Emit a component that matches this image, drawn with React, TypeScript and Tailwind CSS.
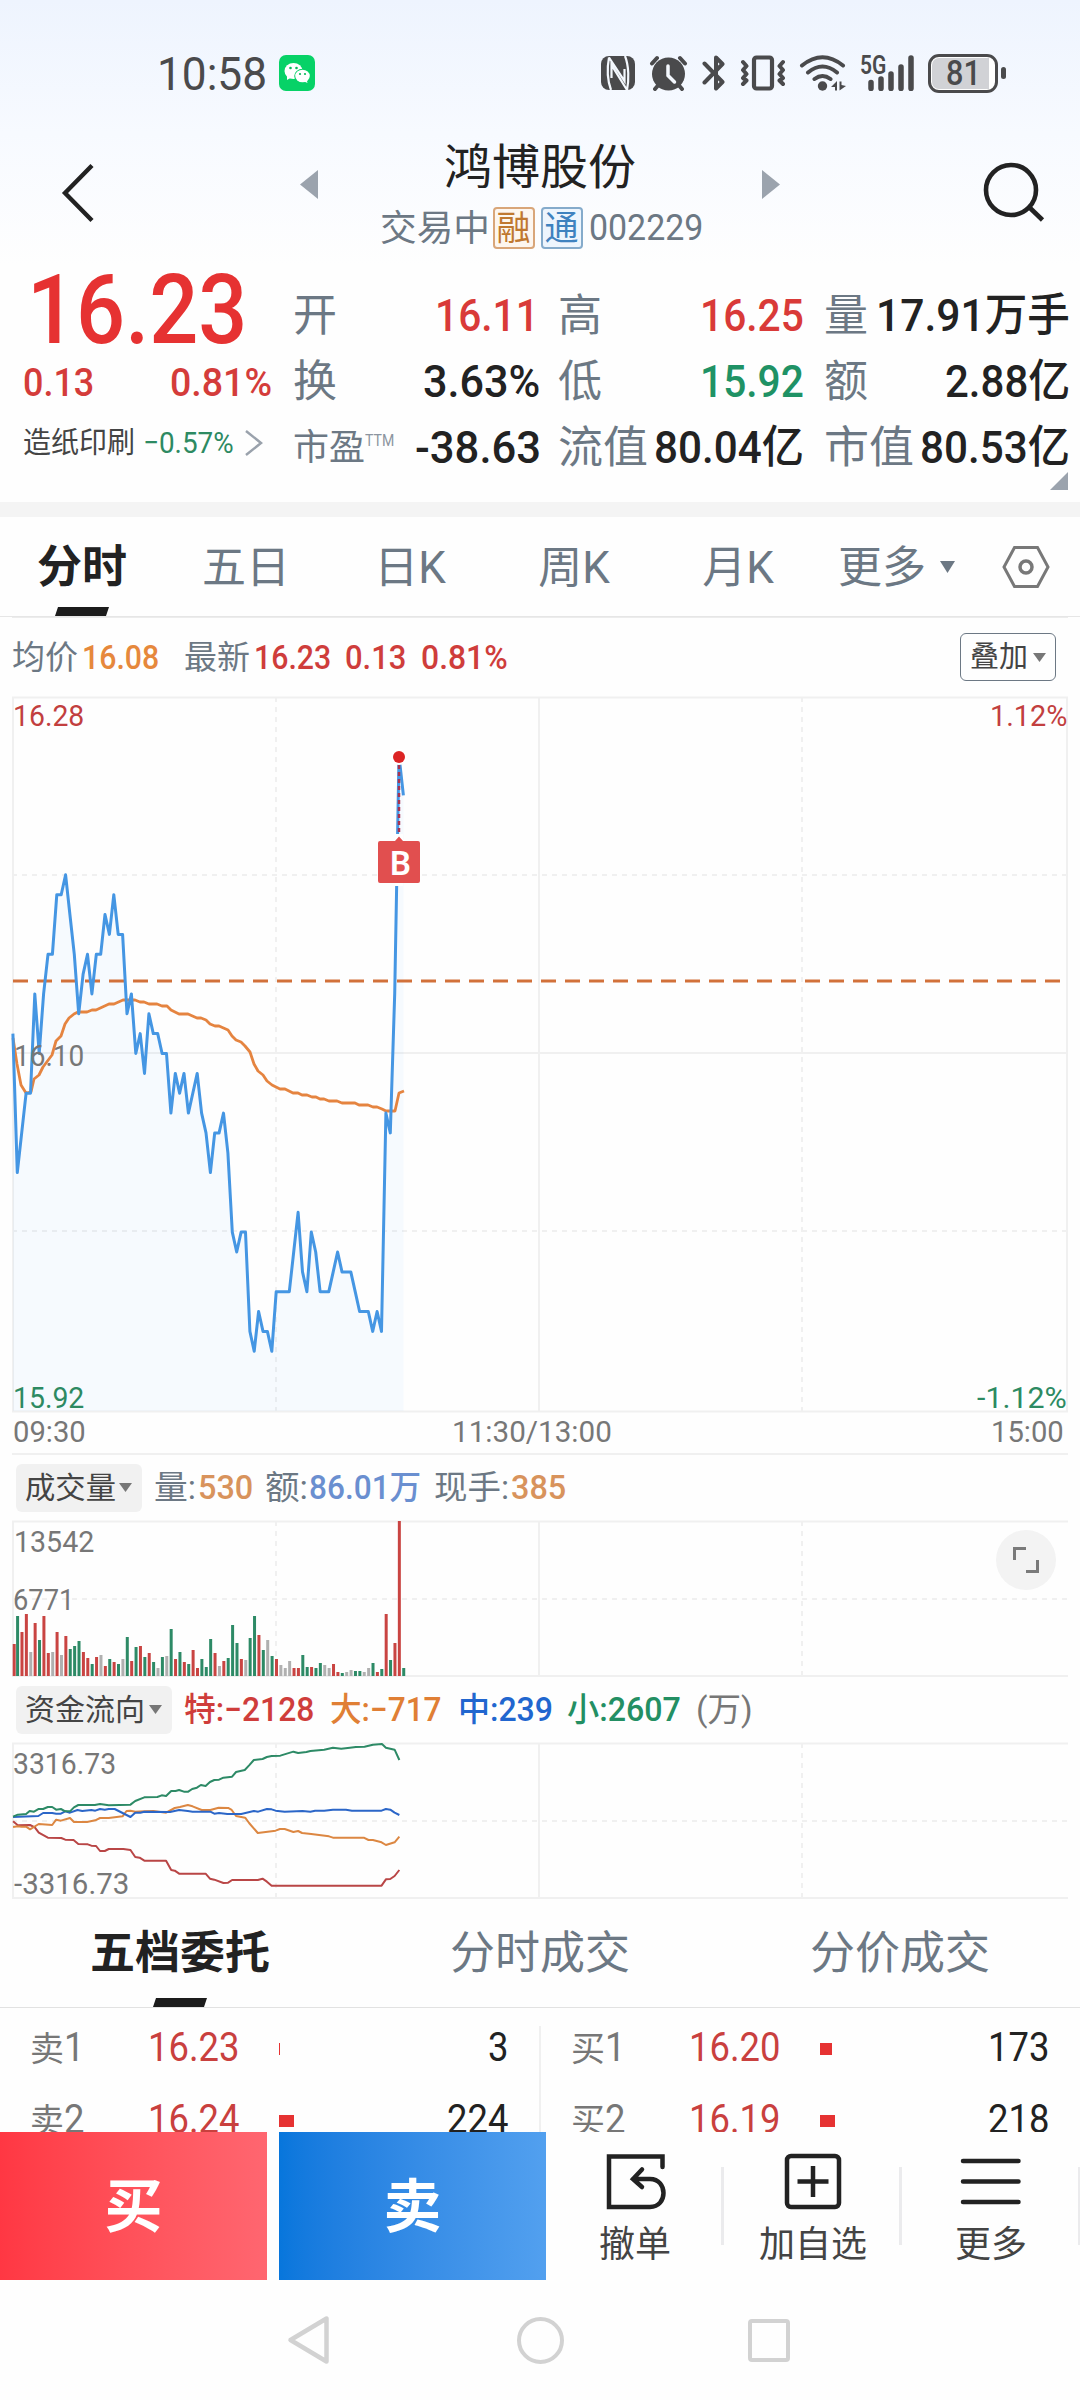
import React, { useLayoutEffect, useRef, useState } from "react";

/** Text squeezed or stretched horizontally so that it fills the width of its box. */
function Fit({ className = "", children }: { className?: string; children: React.ReactNode }) {
  const box = useRef<HTMLSpanElement>(null);
  const inner = useRef<HTMLSpanElement>(null);
  const [scale, setScale] = useState(1);
  useLayoutEffect(() => {
    if (box.current && inner.current) {
      setScale(box.current.clientWidth / inner.current.offsetWidth);
    }
  }, []);
  return (
    <span ref={box} className={"block shrink-0 whitespace-nowrap leading-none " + className}>
      <span ref={inner} className="inline-block origin-left whitespace-nowrap" style={{ transform: `scaleX(${scale})` }}>
        {children}
      </span>
    </span>
  );
}

const Caret = ({ className }: { className: string }) => (
  <svg viewBox="0 0 14 10" preserveAspectRatio="none" className={"shrink-0 " + className}>
    <path d="M0 0H14L7 10Z" fill="currentColor" />
  </svg>
);

function StatusBar() {
  return (
    <div className="flex h-[146px] items-center pl-[157px] text-[#4a4a4c]">
      <Fit className="w-[110px] text-[47px]">10:58</Fit>
      <svg viewBox="0 0 36 36" className="ml-3 h-9 w-9 shrink-0">
        <rect width="36" height="36" rx="7" fill="#07d267" />
        <ellipse cx="14.5" cy="16" rx="9" ry="8" fill="#fff" />
        <path d="M8 21l0 4 5-3z" fill="#fff" />
        <ellipse cx="23.5" cy="21" rx="8.3" ry="7.2" fill="#07d267" />
        <ellipse cx="23.5" cy="21" rx="7.3" ry="6.3" fill="#fff" />
        <path d="M24 26l4.500 2-1-4z" fill="#fff" />
        <g fill="#07b95a">
          <circle cx="11.500" cy="13" r="1.300" />
          <circle cx="17.500" cy="13" r="1.300" />
          <circle cx="21" cy="19" r="1.100" />
          <circle cx="26" cy="19" r="1.100" />
        </g>
      </svg>
      <svg viewBox="601 55 34 36" className="ml-[286px] h-9 w-[34px] shrink-0">
        <rect x="601" y="56" width="34" height="34" rx="8" fill="currentColor" />
        <path d="M609 57.500C607 68 607 79 611 90M609 57.500L624.500 81V69M627 90L611.500 65V78M625 56C629 66 629 80 627 90" fill="none" stroke="#f4f8fe" strokeWidth="2.200" />
      </svg>
      <svg viewBox="649 55 40 36" className="ml-[14px] h-9 w-10 shrink-0" fill="none" stroke="currentColor" strokeLinecap="round">
        <circle cx="668.500" cy="74" r="16.500" fill="currentColor" stroke="none" />
        <path d="M652 63.500L657 58M685 63.500L680 58M655 89L658 85.500M682 89L679 85.500" strokeWidth="4" />
        <path d="M668 66V75.500L674.500 82" stroke="#f4f8fe" strokeWidth="3.500" />
      </svg>
      <svg viewBox="702 55 24 36" className="ml-[13px] h-9 w-6 shrink-0" fill="none" stroke="currentColor" strokeWidth="4" strokeLinecap="round" strokeLinejoin="round">
        <path d="M704.500 63.500L722.500 82L716 88.500V57.500L722.500 64L704.500 82.500" />
      </svg>
      <svg viewBox="740 55 46 36" className="ml-[14px] h-9 w-[46px] shrink-0" fill="none" stroke="currentColor" strokeLinecap="round" strokeLinejoin="round">
        <rect x="754" y="57.500" width="18" height="31" rx="2.500" strokeWidth="4.200" />
        <path d="M743 62L746.500 66L743 70L746.500 74L743 78L746.500 80.500L743 84M783 62L779.500 66L783 70L779.500 74L783 78L779.500 80.500L783 84" strokeWidth="4" />
      </svg>
      <svg viewBox="798 55 50 36" className="ml-3 h-9 w-[50px] shrink-0" fill="none" stroke="currentColor" strokeLinecap="round">
        <path d="M802 65.500Q822.500 49 843 65.500M808 72.500Q822.500 60.500 837 72.500M814.500 79Q822.500 73 830.500 79" strokeWidth="4" />
        <circle cx="822.500" cy="86" r="4.700" fill="currentColor" stroke="none" />
        <path d="M831 87L837 81V90.500H835V87ZM846 86L839.500 90.500V81.500H841.500V85Z" fill="currentColor" stroke="none" />
      </svg>
      <div className="relative ml-3 h-9 w-[54px] shrink-0">
        <svg viewBox="860 55 54 36" className="h-9 w-[54px]" stroke="currentColor" strokeWidth="5.500" strokeLinecap="round">
          <path d="M871 82.500V88.500M881 79V88.500M891 74V88.500M901 67V88.500M911 58V88.500" />
        </svg>
        <Fit className="absolute left-0 -top-0.5 w-[26px] text-[25px] font-semibold">5G</Fit>
      </div>
      <div className="relative ml-[14px] flex h-[39px] w-[70px] shrink-0 items-center justify-center rounded-[11px] border-[3px] border-[#4a4a4c] bg-white">
        <div className="absolute bottom-px left-px top-px w-[57px] rounded-l-[7px] bg-[#d1d2d6]" />
        <Fit className="relative w-[35px] text-[35px] font-medium">81</Fit>
      </div>
      <div className="ml-[3px] h-3 w-[5px] rounded-sm bg-[#4a4a4c]" />
    </div>
  );
}

function Header() {
  return (
    <div className="flex h-[119px] items-start text-[#222]">
      <svg viewBox="60 160 36 66" className="ml-[60px] mt-[14px] h-[66px] w-9 shrink-0">
        <path d="M92 165.500L65 193L92 220.500" fill="none" stroke="currentColor" strokeWidth="4.400" />
      </svg>
      <svg viewBox="0 0 18 29" className="ml-[204px] mt-6 h-[29px] w-[18px] shrink-0">
        <path d="M18 0V29L0 14.500Z" fill="#9ba3ad" />
      </svg>
      <div className="flex w-[444px] shrink-0 flex-col items-center">
        <div className="-mt-[5px] flex h-[54px] items-center text-[48px] leading-none">鸿博股份</div>
        <div className="mt-[12px] flex h-[42px] items-center pl-[2px] text-[#6c7884]">
          <Fit className="mt-0.5 w-[110px] text-[36px]">交易中</Fit>
          <div className="ml-[3px] flex h-[42px] w-[42px] items-center justify-center rounded border-2 border-[#d9a679] bg-[#fdf6ef] text-[34px] leading-none text-[#c07830]">融</div>
          <div className="ml-1.5 flex h-[42px] w-[42px] items-center justify-center rounded border-2 border-[#85abcb] bg-[#edf5fd] text-[34px] leading-none text-[#3f82bf]">通</div>
          <Fit className="ml-1.5 w-[114px] text-[36px]">002229</Fit>
        </div>
      </div>
      <svg viewBox="0 0 18 29" className="mt-6 h-[29px] w-[18px] shrink-0">
        <path d="M0 0V29L18 14.500Z" fill="#9ba3ad" />
      </svg>
      <svg viewBox="980 160 68 66" className="ml-[200px] mt-[14px] h-[66px] w-[68px] shrink-0" fill="none" stroke="currentColor" strokeWidth="4.600">
        <circle cx="1011" cy="190" r="25" />
        <path d="M1029 207L1042.500 220" />
      </svg>
    </div>
  );
}

const lab = "-ml-[2px] pt-[4px] text-[44px] text-[#6c7884]";
const val = "pt-[2px] text-[45px] font-medium";

function Quote() {
  return (
    <div className="relative flex h-[237px] shrink-0 text-[#222]">
      <div className="flex w-[295px] shrink-0 flex-col pl-[23px]">
        <Fit className="mt-[-3px] h-[94px] w-[220px] pl-[4px] text-[97px] font-medium text-[#e63232]">16.23</Fit>
        <div className="mt-0.5 flex h-[50px] items-center text-[#d43c3a]">
          <Fit className="w-[71px] text-[39px] font-medium">0.13</Fit>
          <Fit className="ml-[76px] w-[102px] text-[39px] font-medium">0.81%</Fit>
        </div>
        <div className="mt-[15px] flex h-10 items-center">
          <Fit className="w-[112px] text-[29px] text-[#444]">造纸印刷</Fit>
          <Fit className="ml-[8px] w-[91px] text-[30px] text-[#2d8a62]">−0.57%</Fit>
          <svg viewBox="0 0 18 28" className="ml-[11px] h-7 w-[18px]">
            <path d="M1 2L16 14L1 26" fill="none" stroke="#9aa2ac" strokeWidth="2.500" />
          </svg>
        </div>
      </div>
      <div className="mt-4 grid h-[198px] grid-cols-[246px_19px_244px_22px_244px] grid-rows-3">
        <div className="flex items-center justify-between">
          <Fit className={"w-[44px] " + lab}>开</Fit>
          <Fit className={"mr-[2px] w-[104px] text-[#d93a38] " + val}>16.11</Fit>
        </div>
        <div />
        <div className="flex items-center justify-between">
          <Fit className={"w-[44px] " + lab}>高</Fit>
          <Fit className={"w-[104px] text-[#d93a38] " + val}>16.25</Fit>
        </div>
        <div />
        <div className="flex items-center justify-between">
          <Fit className={"w-[44px] " + lab}>量</Fit>
          <Fit className={"w-[194px] " + val}>17.91万手</Fit>
        </div>

        <div className="flex items-center justify-between">
          <Fit className={"w-[44px] " + lab}>换</Fit>
          <Fit className={"mr-px w-[117px] " + val}>3.63%</Fit>
        </div>
        <div />
        <div className="flex items-center justify-between">
          <Fit className={"w-[44px] " + lab}>低</Fit>
          <Fit className={"w-[104px] text-[#1f9265] " + val}>15.92</Fit>
        </div>
        <div />
        <div className="flex items-center justify-between">
          <Fit className={"w-[44px] " + lab}>额</Fit>
          <Fit className={"w-[125px] " + val}>2.88亿</Fit>
        </div>

        <div className="flex items-center">
          <Fit className="-ml-[2px] w-[72px] pt-[3px] text-[36px] text-[#6c7884]">市盈</Fit>
          <Fit className="-mt-[11px] w-[29px] text-[17px] text-[#8c95a0]">TTM</Fit>
          <Fit className={"ml-auto w-[126px] " + val}>-38.63</Fit>
        </div>
        <div />
        <div className="flex items-center justify-between">
          <Fit className={"w-[90px] " + lab}>流值</Fit>
          <Fit className={"w-[150px] " + val}>80.04亿</Fit>
        </div>
        <div />
        <div className="flex items-center justify-between">
          <Fit className={"w-[90px] " + lab}>市值</Fit>
          <Fit className={"w-[150px] " + val}>80.53亿</Fit>
        </div>
      </div>
      <svg viewBox="0 0 18 18" className="absolute bottom-3 right-3 h-[18px] w-[18px]">
        <path d="M18 0V18H0Z" fill="#9ba3ad" />
      </svg>
    </div>
  );
}

const Underline = () => (
  <svg viewBox="0 0 54 9" className="absolute bottom-0 left-1/2 h-[9px] w-[54px] -translate-x-1/2">
    <path d="M3 0H54L51 9H0Z" fill="#1c1c1c" />
  </svg>
);

function PeriodTabs() {
  return (
    <div className="flex h-[100px] shrink-0 items-center border-b border-[#e6e6e6] text-[44px] leading-none text-[#6c7884]">
      <div className="relative flex h-full w-[164px] items-center justify-center pt-[2px] text-[45px] font-bold text-[#222]">
        分时
        <Underline />
      </div>
      {["五日", "日K", "周K", "月K"].map((t) => (
        <div key={t} className="flex w-[164px] items-center justify-center pt-[2px]">
          {t}
        </div>
      ))}
      <div className="ml-[18px] pt-[2px]">更多</div>
      <Caret className="ml-[14px] h-3 w-[15px]" />
      <svg viewBox="1000 545 52 46" className="ml-[45px] h-[46px] w-[52px]" fill="none" stroke="#787878" strokeWidth="3">
        <path d="M1014.500 548.500H1037.500L1048 568L1037.500 587.500H1014.500L1004 568Z" />
        <circle cx="1026" cy="568" r="6" strokeWidth="3.500" />
      </svg>
    </div>
  );
}

function LegendRow() {
  return (
    <div className="mx-3 flex h-[79px] shrink-0 items-center border-t border-[#ececec] text-[33px] text-[#6c7884]">
      <Fit className="w-[66px]">均价</Fit>
      <Fit className="ml-[4px] w-[77px] font-medium text-[#e6883c]">16.08</Fit>
      <Fit className="ml-[25px] w-[66px]">最新</Fit>
      <Fit className="ml-[4px] w-[77px] font-medium text-[#cf3d3b]">16.23</Fit>
      <Fit className="ml-[14px] w-[61px] font-medium text-[#cf3d3b]">0.13</Fit>
      <Fit className="ml-[15px] w-[87px] font-medium text-[#cf3d3b]">0.81%</Fit>
      <div className="ml-auto mr-3 flex h-12 w-24 items-center justify-center rounded-md border border-[#6c7884] text-[#444]">
        <Fit className="w-[58px] pt-px text-[29px]">叠加</Fit>
        <Caret className="ml-[5px] h-[9px] w-[13px] text-[#777]" />
      </div>
    </div>
  );
}

const MINUTE = 4.388;
const minuteX = (i: number) => 12.9 + i * MINUTE;

/* Price of each minute, in cents relative to 16.10 */
const prices = [
  1, -6, -4, -2, -2, 3, 0, 3, 5, 5, 8, 8, 9, 7, 5, 2, 4, 5, 3, 5, 5, 7, 6, 8, 6, 6, 2, 3, 0, 1, -1, 2, 1, 1, 0, 0, -3,
  -1, -2, -1, -3, -2, -1, -3, -4, -6, -4, -4, -3, -5, -9, -10, -9, -9, -14, -15, -13, -14, -14, -15, -12, -12, -12,
  -12, -10, -8, -11, -12, -9, -10, -12, -12, -12, -11, -10, -11, -11, -11, -12, -13, -13, -13, -14, -13, -14, -3, -4,
  3, 15, 13,
];
const priceY = (c: number) => 357.5 - c * 19.85;
const priceLine = prices.map((c, i) => `${minuteX(i).toFixed(1)},${priceY(c).toFixed(1)}`).join(" ");

const averageLine =
  "13,342 17,368 21,389 26,397 31,396 34,383 39,379 43,371 52,359 56,345 61,340 65,328 69,322 74,318 78,316 87,316 92,314 96,314 109,308 114,308 123,304 135,304 140,306 144,306 149,308 157,308 162,310 167,310 171,314 179,318 188,318 197,322 201,322 206,324 210,328 215,330 219,330 228,334 232,340 236,344 241,346 245,350 250,356 254,368 258,375 263,379 267,385 272,389 280,393 285,393 293,397 298,397 302,399 307,399 312,401 316,401 320,403 324,403 329,405 337,405 342,407 355,407 359,409 368,409 373,411 377,411 382,413 386,415 395,415 399,397 404,395";

const axisText = "absolute text-[30px]";

function PriceChart() {
  return (
    <div className="relative h-[717px] shrink-0">
      <svg viewBox="0 0 1080 717" className="h-[717px] w-[1080px]" fill="none">
        <g stroke="#f0f0f0" strokeWidth="2">
          <path d="M12 1.500H1068M12 357H1068M12 715.500H1068M13 1V716M539 1V716M1067 1V716" />
          <path d="M12 179H1068M12 535H1068M276 1V716M802 1V716" strokeDasharray="5 5" />
        </g>
        <polygon points={`13,715 ${priceLine} 403.500,715`} fill="#3f96f5" fillOpacity="0.04" />
        <path d="M13 285H1062" stroke="#d2713a" strokeWidth="3" strokeDasharray="15 9" />
        <polyline points={averageLine} stroke="#e58440" strokeWidth="2.800" strokeLinejoin="round" />
        <polyline points={priceLine} stroke="#4596e3" strokeWidth="3" strokeLinejoin="round" />
        <circle cx="399" cy="61" r="8" fill="#fff" />
        <path d="M399 69V137" stroke="#a83250" strokeWidth="2.500" strokeDasharray="4 3" />
        <circle cx="399" cy="61" r="6" fill="#dc2424" />
        <path d="M395 187h8v3h-8zM395 138h8v6h-8z" fill="#fff" />
        <path d="M380 145H395L399 140.500L403 145H418Q420 145 420 147V185Q420 187 418 187H380Q378 187 378 185V147Q378 145 380 145Z" fill="#e14f4f" />
      </svg>
      <Fit className="absolute left-[390px] top-[151px] w-[21px] text-[33px] font-semibold text-white">B</Fit>
      <Fit className={axisText + " left-[13px] top-[5px] w-[71px] text-[#c23f3f]"}>16.28</Fit>
      <Fit className={axisText + " left-[14px] top-[345px] w-[70px] text-[#777]"}>16.10</Fit>
      <Fit className={axisText + " left-[13px] top-[687px] w-[71px] text-[#2d8a62]"}>15.92</Fit>
      <Fit className={axisText + " left-[990px] top-[5px] w-[77px] text-[#c23f3f]"}>1.12%</Fit>
      <Fit className={axisText + " left-[977px] top-[687px] w-[90px] text-[#2d8a62]"}>-1.12%</Fit>
    </div>
  );
}

function TimeAxis() {
  return (
    <div className="mx-3 flex h-[42px] shrink-0 items-center border-b-2 border-[#f0f0f0] pb-0.5 text-[30px] text-[#777]">
      <Fit className="ml-px w-[73px]">09:30</Fit>
      <Fit className="ml-[366px] w-[160px]">11:30/13:00</Fit>
      <Fit className="ml-auto mr-[4px] w-[73px]">15:00</Fit>
    </div>
  );
}

const pill = "ml-4 flex h-12 shrink-0 items-center rounded-md bg-[#f1f1f1] pl-[9px] text-[30px] text-[#444]";

function VolumeRow() {
  return (
    <div className="flex h-[65px] shrink-0 items-center text-[33px] text-[#6c7884]">
      <div className={pill + " w-[126px]"}>
        <Fit className="w-[91px]">成交量</Fit>
        <Caret className="ml-[3px] h-[9px] w-[13px] text-[#777]" />
      </div>
      <Fit className="ml-[12px] w-[42px]">量:</Fit>
      <Fit className="ml-[2px] w-[55px] font-medium text-[#d8935c]">530</Fit>
      <Fit className="ml-[12px] w-[43px]">额:</Fit>
      <Fit className="ml-[1px] w-[112px] font-medium text-[#6a8fd0]">86.01万</Fit>
      <Fit className="ml-[13px] w-[75px]">现手:</Fit>
      <Fit className="ml-[2px] w-[55px] font-medium text-[#d8935c]">385</Fit>
    </div>
  );
}

/* Bar height of each minute; r = up, g = down, n = unchanged */
const volumes =
  "r32 g60 r44 r62 n24 r53 g36 r60 r23 n24 r44 n21 r40 g27 g30 g35 r24 r18 g12 r19 n21 r10 g17 r14 g12 n17 g39 r15 g29 r30 g19 r23 g14 n8 g19 n20 g47 r17 g24 r14 g12 r26 r8 g17 g9 g37 r23 n10 r15 g18 g51 g33 r17 n16 g38 g60 r41 g26 n36 g20 r17 n11 n8 n15 r8 r8 g21 g9 r9 g8 g13 n11 n8 r12 r4 g3 n4 n6 g5 g5 n4 n8 g13 r4 g7 r62 g16 r33 r155 g8"
    .split(" ")
    .map((v) => ({ kind: v[0], height: Number(v.slice(1)) }));
const barColors: Record<string, string> = { r: "#c94442", g: "#2d8a66", n: "#b0b0b0" };

const SubGrid = () => (
  <g stroke="#f0f0f0" strokeWidth="2">
    <path d="M12 1.500H1068M12 156H1068M13 1V156M539 1V156" />
    <path d="M12 79H1068M276 1V156M802 1V156" strokeDasharray="5 5" />
  </g>
);

function VolumeChart() {
  return (
    <div className="relative h-[157px] shrink-0">
      <svg viewBox="0 0 1080 157" className="h-[157px] w-[1080px]" fill="none">
        <SubGrid />
        {volumes.map((v, i) => (
          <rect key={i} x={minuteX(i) - 0.2 - (i === 0 ? 0 : 1)} y={156 - v.height} width={3} height={v.height} fill={barColors[v.kind]} />
        ))}
      </svg>
      <Fit className={axisText + " left-[14px] top-[7px] w-[80px] text-[#777]"}>13542</Fit>
      <Fit className={axisText + " left-[13px] top-[65px] w-[61px] text-[#777]"}>6771</Fit>
      <div className="absolute right-6 top-[10px] flex h-[60px] w-[60px] items-center justify-center rounded-full bg-[#f3f3f3]">
        <svg viewBox="0 0 28 28" className="h-7 w-7" fill="none" stroke="#7a7a7a" strokeWidth="3">
          <path d="M2.500 14V2.500H14M25.500 14V25.500H14" />
        </svg>
      </div>
    </div>
  );
}

function FlowRow() {
  return (
    <div className="flex h-[65px] shrink-0 items-center text-[33px] font-medium">
      <div className={pill + " w-[156px] font-normal"}>
        <Fit className="w-[120px]">资金流向</Fit>
        <Caret className="ml-[4px] h-[9px] w-[13px] text-[#777]" />
      </div>
      <Fit className="ml-[12px] w-[130px] text-[#cf3d3b]">特:−2128</Fit>
      <Fit className="ml-[16px] w-[112px] text-[#e07f35]">大:−717</Fit>
      <Fit className="ml-[16px] w-[95px] text-[#2166cf]">中:239</Fit>
      <Fit className="ml-[14px] w-[114px] text-[#238f63]">小:2607</Fit>
      <Fit className="ml-[15px] w-[57px] font-normal text-[#777]">(万)</Fit>
    </div>
  );
}

const flows = [
  {
    color: "#b94646",
    points:
      "33,1144 45,1156 76,1155 88,1162 98,1178 121,1193 155,1194 165,1199 186,1200 198,1212 222,1213 231,1217 243,1218 253,1233 265,1233 275,1227 312,1227 330,1230 342,1251 353,1253 365,1262 420,1262 433,1290 442,1292 453,1301 520,1301 531,1316 542,1319 565,1329 577,1328 587,1320 652,1320 664,1316 675,1325 687,1337 965,1337 976,1318 987,1317 998,1308 1010,1290",
  },
  {
    color: "#dc8742",
    points:
      "33,1161 45,1159 54,1160 66,1160 76,1168 98,1152 132,1155 142,1139 154,1142 177,1134 187,1146 220,1146 241,1141 253,1134 275,1134 310,1129 320,1113 330,1112 342,1115 365,1114 388,1113 420,1118 442,1104 455,1101 475,1095 487,1099 510,1110 532,1110 553,1103 577,1104 586,1110 597,1128 620,1133 630,1149 652,1179 697,1172 708,1167 720,1167 742,1176 754,1173 764,1179 787,1182 832,1189 842,1193 920,1193 932,1200 943,1200 965,1207 976,1215 998,1207 1010,1190",
  },
  {
    color: "#2b66c8",
    points:
      "33,1131 97,1128 109,1119 132,1119 142,1121 154,1121 165,1114 177,1118 196,1110 208,1113 231,1110 241,1112 253,1107 265,1109 275,1107 290,1107 330,1131 342,1118 355,1118 365,1115 430,1116 453,1110 475,1113 487,1115 532,1115 542,1121 554,1119 575,1122 610,1122 642,1113 653,1115 675,1107 687,1108 697,1112 720,1115 765,1113 785,1115 797,1112 820,1112 842,1109 875,1109 890,1112 965,1112 976,1107 987,1109 998,1118 1010,1125",
  },
  {
    color: "#2d8a66",
    points:
      "33,1130 45,1124 66,1122 75,1113 86,1115 98,1107 109,1107 121,1101 132,1101 142,1109 154,1107 165,1114 177,1114 187,1102 198,1095 240,1095 253,1092 275,1096 330,1094 342,1083 365,1072 398,1071 409,1066 420,1068 433,1053 444,1053 453,1050 465,1055 476,1055 486,1047 498,1043 508,1035 520,1038 531,1026 542,1020 554,1019 565,1013 587,1010 597,996 619,990 630,976 642,960 664,957 675,951 687,948 709,947 742,935 754,939 775,936 785,933 820,929 842,923 863,926 885,923 900,921 922,920 943,914 966,912 976,923 998,929 1010,960",
  },
];

function FlowChart() {
  return (
    <div className="relative h-[157px] shrink-0">
      <svg viewBox="0 0 1080 157" className="h-[157px] w-[1080px]" fill="none">
        <SubGrid />
        <g transform="translate(0 -302) scale(0.3954 0.33333)">
          {flows.map((f) => (
            <polyline key={f.color} points={f.points} stroke={f.color} strokeWidth="2" strokeLinejoin="round" vectorEffect="non-scaling-stroke" />
          ))}
        </g>
      </svg>
      <Fit className={axisText + " left-[13px] top-[7px] w-[103px] text-[#777]"}>3316.73</Fit>
      <Fit className={axisText + " left-[14px] top-[127px] w-[115px] text-[#777]"}>-3316.73</Fit>
    </div>
  );
}

function DepthTabs() {
  return (
    <div className="flex h-[109px] shrink-0 border-b border-[#e2e2e2] text-[45px] leading-none text-[#6c7884]">
      <div className="relative flex h-full w-[360px] items-center justify-center font-bold text-[#222]">
        五档委托
        <Underline />
      </div>
      <div className="flex w-[360px] items-center justify-center">分时成交</div>
      <div className="flex w-[360px] items-center justify-center">分价成交</div>
    </div>
  );
}

type Level = { side: string; no: string; price: string; bar: string; qty: string; qtyWidth: string };

function LevelRow({ side, no, price, bar, qty, qtyWidth }: Level) {
  return (
    <div className="flex h-[72px] items-center">
      <div className="w-[34px] pt-0.5 text-[34px] leading-none text-[#777]">{side}</div>
      <Fit className="w-[20px] text-[40px] text-[#777]">{no}</Fit>
      <Fit className="ml-[64px] w-[91px] text-[40px] text-[#c9403e]">{price}</Fit>
      <div className="ml-[40px] flex flex-1 pt-0.5">
        <div className={"h-3 bg-[#e63232] " + bar} />
      </div>
      <Fit className={"text-[40px] text-[#222] " + qtyWidth}>{qty}</Fit>
    </div>
  );
}

function OrderBook() {
  return (
    <div className="flex h-[124px] shrink-0 overflow-hidden">
      <div className="mt-[18px] w-[541px] border-r-2 border-[#f0f0f0] pl-[30px] pr-[31px]">
        <div className="-mt-[14px]">
          <LevelRow side="卖" no="1" price="16.23" bar="w-px" qty="3" qtyWidth="w-[20px]" />
          <LevelRow side="卖" no="2" price="16.24" bar="w-[15px]" qty="224" qtyWidth="w-[61px]" />
        </div>
      </div>
      <div className="w-[539px] pl-[30px] pr-[31px] pt-1">
        <LevelRow side="买" no="1" price="16.20" bar="w-3" qty="173" qtyWidth="w-[61px]" />
        <LevelRow side="买" no="2" price="16.19" bar="w-[15px]" qty="218" qtyWidth="w-[61px]" />
      </div>
    </div>
  );
}

const action = "flex h-full w-[178px] flex-col items-center pt-[21px] text-[36px] leading-none text-[#444]";

function ActionBar() {
  return (
    <div className="flex h-[148px] shrink-0 text-[#222]">
      <div className="flex w-[267px] shrink-0 items-center justify-center bg-linear-to-r from-[#ff3743] to-[#ff6670] pt-0.5 text-[58px] font-bold leading-none text-white">买</div>
      <div className="ml-3 flex w-[267px] shrink-0 items-center justify-center bg-linear-to-r from-[#0776dc] to-[#52a0ef] pt-0.5 text-[58px] font-bold leading-none text-white">卖</div>
      <div className={action + " shrink-0"}>
        <svg viewBox="605 2153 62 58" className="h-[58px] w-[62px]" fill="none" stroke="#222" strokeWidth="4.500" strokeLinecap="round">
          <path d="M663.500 2167V2156.500H610V2207H651C669 2207 669 2179 651 2179H634M643 2169.500L634 2179L643 2187" />
        </svg>
        <div className="mt-[16px]">撤单</div>
      </div>
      <div className="-ml-[3px] mt-[35px] h-[78px] w-[3px] shrink-0 bg-[#ebebed]" />
      <div className={action + " shrink-0"}>
        <svg viewBox="784 2153 58 58" className="h-[58px] w-[58px]" fill="none" stroke="#222" strokeWidth="4.500">
          <rect x="787" y="2156" width="52" height="51" rx="4" />
          <path d="M797.500 2181.500H828.500M813 2166V2197" />
        </svg>
        <div className="mt-[16px]">加自选</div>
      </div>
      <div className="-ml-[3px] mt-[35px] h-[78px] w-[3px] shrink-0 bg-[#ebebed]" />
      <div className={action + " shrink-0"}>
        <svg viewBox="960 2153 62 58" className="h-[58px] w-[62px]" stroke="#222" strokeWidth="4.500" strokeLinecap="round">
          <path d="M963 2161H1018.500M963 2181.500H1018.500M963 2202H1018.500" />
        </svg>
        <div className="mt-[16px]">更多</div>
      </div>
      <div className="-ml-[2px] mt-[35px] h-[78px] w-[3px] shrink-0 bg-[#ebebed]" />
    </div>
  );
}

function NavBar() {
  return (
    <div className="flex h-[120px] shrink-0 items-center pl-[286px]">
      <svg viewBox="286 2314 46 52" className="h-[52px] w-[46px]" fill="none" stroke="#d2d2d2" strokeWidth="4.500" strokeLinejoin="round">
        <path d="M326.500 2318.500V2361.500L290.500 2340Z" />
      </svg>
      <div className="ml-[185px] h-[47px] w-[47px] rounded-full border-[4px] border-[#d2d2d2]" />
      <div className="ml-[184px] h-[43px] w-[42px] rounded-[4px] border-[4px] border-[#d2d2d2]" />
    </div>
  );
}

export default function App() {
  return (
    <div className="flex h-[2400px] w-[1080px] flex-col overflow-hidden bg-[#fefefe] font-[Roboto,'Noto_Sans_CJK_SC',sans-serif]">
      <div className="shrink-0 bg-linear-to-b from-[#eef4fe] via-[#f7faff] to-[#fefefe]">
        <StatusBar />
        <Header />
      </div>
      <Quote />
      <div className="h-[15px] shrink-0 bg-[#f4f4f4]" />
      <PeriodTabs />
      <LegendRow />
      <PriceChart />
      <TimeAxis />
      <VolumeRow />
      <VolumeChart />
      <FlowRow />
      <FlowChart />
      <DepthTabs />
      <OrderBook />
      <ActionBar />
      <NavBar />
    </div>
  );
}
